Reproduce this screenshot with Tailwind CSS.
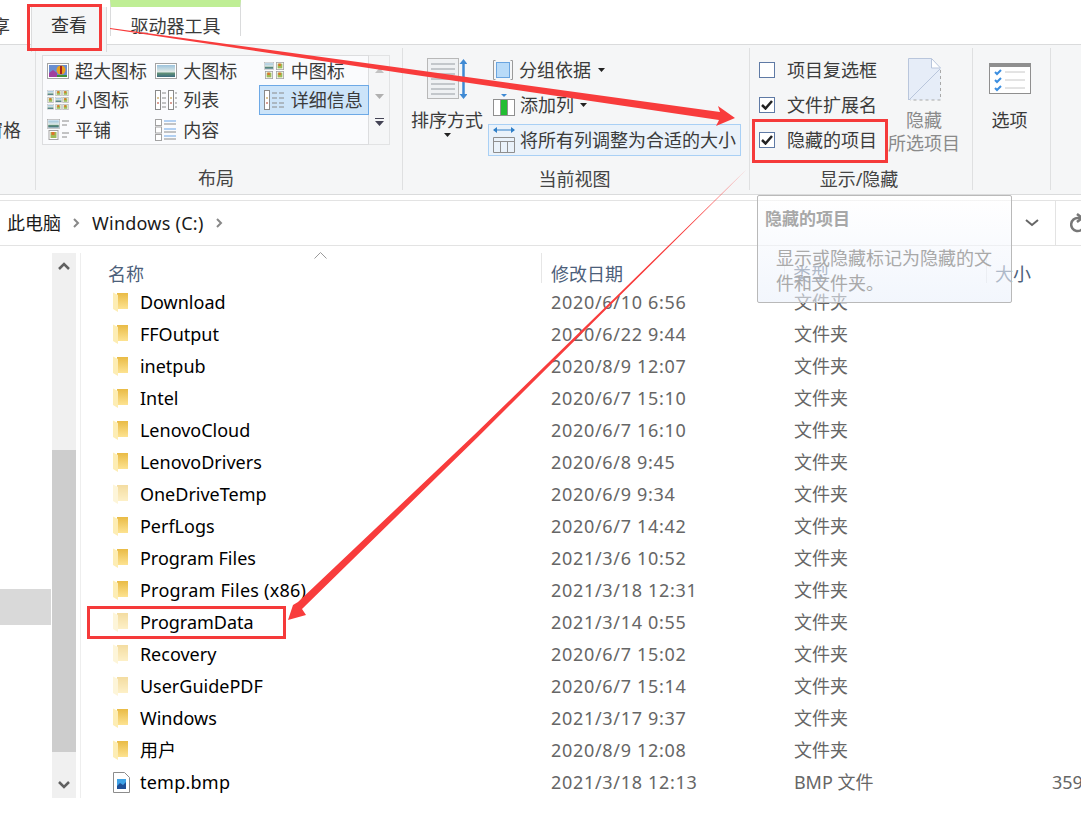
<!DOCTYPE html>
<html lang="zh-CN">
<head>
    <meta charset="UTF-8">
    <title>此电脑 - Windows (C:)</title>
    <script src="https://cdn.jsdelivr.net/npm/@tailwindcss/browser@4"></script>
</head>
<body class="bg-white">
<svg class="absolute w-0 h-0">
    <defs>
        <linearGradient id="gold" x1="0" y1="0" x2="0" y2="1"><stop offset="0" stop-color="#e9bb45"/><stop offset="1" stop-color="#fde391"/></linearGradient>
        <linearGradient id="sky" x1="0" y1="0" x2="0" y2="1"><stop offset="0" stop-color="#9cc3dc"/><stop offset=".55" stop-color="#dfe9e6"/><stop offset=".7" stop-color="#5f8f78"/><stop offset="1" stop-color="#3d6d80"/></linearGradient>
        <symbol id="folder" viewBox="0 0 15 20">
            <path d="M4 1h11v16H4z" fill="url(#gold)"/>
            <path d="M0 .5 5 3v17l-5-3z" fill="#fdedb4"/>
        </symbol>
        <symbol id="land" viewBox="0 0 22 16">
            <rect x=".5" y=".5" width="21" height="15" fill="#fff" stroke="#a3a3a3"/>
            <rect x="2" y="2" width="18" height="12" fill="url(#sky)"/>
        </symbol>
        <symbol id="flower" viewBox="0 0 10 10">
            <rect x=".5" y=".5" width="9" height="9" fill="#fff" stroke="#a3a3a3"/>
            <rect x="2" y="2" width="6" height="6" fill="#9dbb57"/>
            <rect x="3" y="2" width="3" height="3" fill="#e0722b"/>
        </symbol>
    </defs>
</svg>

<div class="relative w-[1081px] h-[816px] overflow-hidden bg-white text-[18px] leading-none text-[#3b3b3b] font-['Noto_Sans','Noto_Sans_CJK_SC',sans-serif]">

    <!-- tabs -->
    <div class="flex h-[45px] border-b border-[#dadbdc]">
        <div class="w-[31px] flex justify-end items-center pt-[8px] pr-[21px] overflow-hidden whitespace-nowrap">共享</div>
        <div class="w-[76px] h-[45px] mt-[7px] -mb-[1px] bg-[#f5f6f7] border-x border-[#dadbdc] flex items-center justify-center pb-[10px] text-[#333]">查看</div>
        <div class="ml-[3px] w-[131px] h-[36px] border-x border-[#dadbdc] border-t-[7px] border-t-[#bfee95] bg-white flex items-center justify-center pt-[8px]">驱动器工具</div>
    </div>

    <!-- ribbon -->
    <div class="flex h-[150px] bg-[#f5f6f7] border-b border-[#dadbdc] pt-[3px] pb-[4px]">
        <div class="w-[36px] border-r border-[#dfe0e1] overflow-hidden whitespace-nowrap flex justify-end pr-[14px] pt-[73px]">窗格</div>

        <!-- layout -->
        <div class="w-[367px] border-r border-[#dfe0e1] flex flex-col items-start pl-[6px]">
            <div class="flex mt-[7px]">
                <div class="w-[327px] h-[90px] bg-[#fafbfd] border border-[#dcdddf] grid grid-cols-3 grid-rows-[29px_30px_29px]">
                    <div class="flex items-center pl-[4px] gap-[6px]">
                        <svg class="w-[22px] h-[16px]" viewBox="0 0 22 16"><rect x=".5" y=".5" width="21" height="15" fill="#fff" stroke="#a3a3a3"/><rect x="2" y="2" width="18" height="12" fill="#6a8ed0"/><path d="M2 14v-4l4-3 4 3v4z" fill="#a13f9e"/><path d="M10 14h10v-2H10z" fill="#3f8f3a"/><circle cx="14" cy="7" r="4.5" fill="#e8a020"/><rect x="13" y="3" width="2" height="8" fill="#a32020"/></svg>
                        <span>超大图标</span>
                    </div>
                    <div class="flex items-center pl-[4px] gap-[6px]">
                        <svg class="w-[22px] h-[16px]"><use href="#land"/></svg>
                        <span>大图标</span>
                    </div>
                    <div class="flex items-center pl-[4px] gap-[6px]">
                        <span class="grid grid-cols-2 gap-[1px] w-[21px]">
                            <svg class="w-[10px] h-[8px]"><use href="#land"/></svg>
                            <svg class="w-[10px] h-[8px]"><use href="#flower"/></svg>
                            <svg class="w-[10px] h-[8px]"><use href="#flower"/></svg>
                            <svg class="w-[10px] h-[8px]"><use href="#flower"/></svg>
                        </span>
                        <span>中图标</span>
                    </div>
                    <div class="flex items-center pl-[4px] gap-[6px]">
                        <span class="grid grid-cols-3 gap-px w-[22px]">
                            <svg class="w-[7px] h-[6px]"><use href="#land"/></svg><svg class="w-[7px] h-[6px]"><use href="#flower"/></svg><svg class="w-[7px] h-[6px]"><use href="#flower"/></svg>
                            <svg class="w-[7px] h-[6px]"><use href="#flower"/></svg><svg class="w-[7px] h-[6px]"><use href="#land"/></svg><svg class="w-[7px] h-[6px]"><use href="#flower"/></svg>
                            <svg class="w-[7px] h-[6px]"><use href="#land"/></svg><svg class="w-[7px] h-[6px]"><use href="#flower"/></svg><svg class="w-[7px] h-[6px]"><use href="#flower"/></svg>
                        </span>
                        <span>小图标</span>
                    </div>
                    <div class="flex items-center pl-[4px] gap-[6px]">
                        <svg class="w-[22px] h-[20px]" viewBox="0 0 22 20" fill="none" stroke="#8a8a8a"><rect x=".5" y=".5" width="5" height="19" fill="#fff"/><rect x="13.5" y=".5" width="5" height="19" fill="#fff"/><path d="M7 3h4M7 8h4M7 13h4M7 17h4M20 3h2M20 8h2M20 13h2M20 17h2"/><path d="M2 8h2M15 8h2" stroke="#b98a2c"/><path d="M2 13h2M15 13h2" stroke="#b5402c"/></svg>
                        <span>列表</span>
                    </div>
                    <div class="flex items-center pl-[4px] gap-[5px] bg-[#cce4f9] border border-[#6da9e6] -ml-[1px] -mr-[1px]">
                        <svg class="w-[22px] h-[20px]" viewBox="0 0 22 20" fill="none" stroke="#8a8a8a"><rect x=".5" y=".5" width="5" height="19" fill="#fff"/><path d="M8 3h5M15 3h5M8 8h5M15 8h5M8 13h5M15 13h5M8 17h5M15 17h5"/><path d="M2 8h2" stroke="#b98a2c"/><path d="M2 13h2" stroke="#b5402c"/></svg>
                        <span>详细信息</span>
                    </div>
                    <div class="flex items-center pl-[4px] gap-[6px]">
                        <span class="grid grid-cols-[13px_9px] gap-y-[1px] w-[22px]">
                            <svg class="w-[13px] h-[10px]"><use href="#land"/></svg>
                            <svg class="w-[9px] h-[10px]" viewBox="0 0 9 10" stroke="#8a8a8a"><path d="M2 2h7M2 6h5"/></svg>
                            <svg class="w-[13px] h-[10px]"><use href="#flower"/></svg>
                            <svg class="w-[9px] h-[10px]" viewBox="0 0 9 10" stroke="#8a8a8a"><path d="M2 3h7M2 7h5"/></svg>
                        </span>
                        <span>平铺</span>
                    </div>
                    <div class="flex items-center pl-[4px] gap-[6px]">
                        <svg class="w-[22px] h-[22px]" viewBox="0 0 22 22" fill="#fff"><g stroke="#a3a3a3"><rect x=".5" y=".5" width="6" height="6"/><rect x=".5" y="8" width="6" height="6"/><rect x=".5" y="15.5" width="6" height="6"/></g><path d="M9 2h12M9 10h12M9 17h12" stroke="#6aa5e8"/><path d="M9 5h12M9 13h12M9 20h12" stroke="#8a8a8a"/></svg>
                        <span>内容</span>
                    </div>
                </div>
                <div class="w-[21px] h-[90px] border border-l-0 border-[#e2e3e4] flex flex-col items-center">
                    <svg class="w-[9px] h-[5px] mt-[12px]" viewBox="0 0 9 5" fill="#c3c3c3"><path d="M0 5 4.500 0 9 5z"/></svg>
                    <svg class="w-[9px] h-[5px] mt-[21px]" viewBox="0 0 9 5" fill="#b0b0b0"><path d="M0 0 4.500 5 9 0z"/></svg>
                    <svg class="w-[9px] h-[8px] mt-[19px]" viewBox="0 0 9 8" fill="#445"><path d="M0 0h9v1H0zM0 3l4.500 5L9 3z"/></svg>
                </div>
            </div>
            <div class="w-[348px] text-center mt-[24px] text-[#444]">布局</div>
        </div>

        <!-- current view -->
        <div class="w-[347px] border-r border-[#dfe0e1] flex flex-col">
            <div class="flex h-[115px] pl-[6px]">
                <div class="w-[76px] flex flex-col items-center pt-[10px]">
                    <svg class="w-[40px] h-[42px]" viewBox="0 0 40 42"><rect x=".5" y=".5" width="31" height="40" fill="#eff1f3" stroke="#b8b8b8"/><path d="M4 6h24M4 11h24M4 16h24M4 21h24M4 26h24M4 31h24M4 36h24" stroke="#c3c7cb" stroke-width="2"/><path d="M36.500 3v36" stroke="#3f8ad4" stroke-width="2.500"/><path d="M32.500 6 36.500 1l4 5zM32.500 36l4 5 4-5z" fill="#3f8ad4"/></svg>
                    <span class="mt-[11px]">排序方式</span>
                    <svg class="w-[7px] h-[4px] mt-[4px]" viewBox="0 0 7 4" fill="#222"><path d="M0 0h7L3.500 4z"/></svg>
                </div>
                <div class="flex flex-col items-start ml-[3px] pt-[6px]">
                    <div class="h-[32px] flex items-center pl-[5px] gap-[6px]">
                        <svg class="w-[20px] h-[20px]" viewBox="0 0 20 20" fill="none"><path d="M2.500 .5h-2v19h2M17.500 .5h2v19h-2" stroke="#9a9a9a"/><rect x="3.500" y="2.500" width="13" height="15" fill="#b9dbf8" stroke="#6aa5e0"/></svg>
                        <span>分组依据</span>
                        <svg class="w-[7px] h-[4px] ml-[1px]" viewBox="0 0 7 4" fill="#222"><path d="M0 0h7L3.500 4z"/></svg>
                    </div>
                    <div class="h-[38px] flex items-center pl-[5px] gap-[5px]">
                        <svg class="w-[22px] h-[22px]" viewBox="0 0 22 22" fill="none"><path d="M8 0h6l-3 3z" fill="#3f8ad4"/><rect x=".5" y="5.500" width="21" height="16" fill="#fff" stroke="#8f8f8f"/><path d="M7.500 6v15M14.500 6v15" stroke="#8f8f8f"/><rect x="8" y="6" width="6" height="15" fill="#22bd32"/></svg>
                        <span>添加列</span>
                        <svg class="w-[7px] h-[4px] ml-[1px]" viewBox="0 0 7 4" fill="#222"><path d="M0 0h7L3.500 4z"/></svg>
                    </div>
                    <div class="h-[32px] w-[253px] flex items-center pl-[4px] gap-[5px] bg-[#eaf2fa] border border-[#a9d0f5] whitespace-nowrap">
                        <svg class="w-[22px] h-[26px] shrink-0" viewBox="0 0 22 26" fill="none"><path d="M1 3h20" stroke="#2f7fc8"/><path d="M4 0 0 3l4 3zM18 0l4 3-4 3z" fill="#2f7fc8"/><path d="M.5 10.500h21v15H.5zM.5 14.500h21M7.500 15v10M14.500 15v10" stroke="#8f8f8f"/></svg>
                        <span>将所有列调整为合适的大小</span>
                    </div>
                </div>
            </div>
            <div class="text-center text-[#444] mt-[7px] pr-[3px]">当前视图</div>
        </div>

        <!-- show/hide -->
        <div class="w-[223px] border-r border-[#dfe0e1] flex flex-col">
            <div class="flex h-[115px]">
                <div class="flex flex-col w-[140px] pl-[9px] pt-[4px]">
                    <label class="h-[35px] flex items-center gap-[12px] whitespace-nowrap"><span class="w-[16px] h-[16px] border border-[#5f7aa5] bg-white"></span>项目复选框</label>
                    <label class="h-[35px] flex items-center gap-[12px] whitespace-nowrap"><span class="w-[16px] h-[16px] border border-[#5f7aa5] bg-white flex items-center justify-center"><svg class="w-[12px] h-[10px]" viewBox="0 0 12 10" fill="none" stroke="#222" stroke-width="2.500"><path d="M1 5l3.500 3.500L11 1"/></svg></span>文件扩展名</label>
                    <label class="h-[35px] flex items-center gap-[12px] whitespace-nowrap"><span class="w-[16px] h-[16px] border border-[#5f7aa5] bg-white flex items-center justify-center"><svg class="w-[12px] h-[10px]" viewBox="0 0 12 10" fill="none" stroke="#222" stroke-width="2.500"><path d="M1 5l3.500 3.500L11 1"/></svg></span>隐藏的项目</label>
                </div>
                <div class="flex flex-col items-center w-[72px] pt-[10px] text-[#8a8a8a] whitespace-nowrap -ml-[2px]">
                    <svg class="w-[33px] h-[43px]" viewBox="0 0 33 43" fill="none"><path d="M.5 42V.5h23L32.500 10v32" fill="#e6edf8"/><path d="M.5 42V.5h23" stroke="#b9c6dc"/><path d="M23.500.5V10h9z" fill="#fff" stroke="#b9c6dc"/><path d="M32.500 12v30H2" stroke="#a9a9a9" stroke-dasharray="3 3"/><path d="M1 42 32 11" stroke="#b9c6dc"/></svg>
                    <span class="mt-[10px]">隐藏</span>
                    <span class="mt-[5px]">所选项目</span>
                </div>
            </div>
            <div class="text-center text-[#444] mt-[7px] pr-[4px]">显示/隐藏</div>
        </div>

        <!-- options -->
        <div class="w-[78px] border-r border-[#dfe0e1] flex flex-col items-center pt-[15px] pr-[4px]">
            <svg class="w-[42px] h-[31px]" viewBox="0 0 42 31" fill="none"><rect x=".5" y=".5" width="41" height="30" fill="#fff" stroke="#8f8f8f"/><rect width="42" height="4" fill="#8f8f8f"/><path d="M6 9l2 2 4-4M6 17l2 2 4-4M6 25l2 2 4-4" stroke="#3b8ee0" stroke-width="2"/><path d="M16 9h20M16 17h20M16 25h20" stroke="#c8c8c8"/></svg>
            <span class="mt-[17px]">选项</span>
        </div>
    </div>

    <!-- address bar -->
    <div class="flex items-center h-[46px] mt-[5px] border-t border-[#e3e3e3] border-b pl-[7px] text-[#1a1a1a]">
        <span>此电脑</span>
        <svg class="w-[7px] h-[10px] mx-[12px]" viewBox="0 0 7 10" fill="none" stroke="#888" stroke-width="2"><path d="M1 1l4 4-4 4"/></svg>
        <span class="tracking-[0.25px]">Windows (C:)</span>
        <svg class="w-[7px] h-[10px] ml-[12px]" viewBox="0 0 7 10" fill="none" stroke="#888" stroke-width="2"><path d="M1 1l4 4-4 4"/></svg>
        <svg class="w-[14px] h-[8px] ml-auto" viewBox="0 0 14 8" fill="none" stroke="#666" stroke-width="2"><path d="M1 1l6 5 6-5"/></svg>
        <div class="w-[26px] h-full ml-[16px] border-l border-[#e3e3e3] flex items-center pl-[14px]">
            <svg class="w-[16px] h-[20px] shrink-0" viewBox="0 0 16 20" fill="none" stroke="#777" stroke-width="2.500"><path d="M11 5H8a6.500 6.500 0 1 0 6 8"/><path d="M7 1l5 4-5 4"/></svg>
        </div>
    </div>

    <!-- content -->
    <div class="flex pt-[7px]">
        <div class="w-[52px] pt-[336px] shrink-0">
            <div class="w-[51px] h-[36px] bg-[#d9d9d9]"></div>
        </div>
        <div class="w-[24px] h-[545px] bg-[#f0f0f0] flex flex-col items-center shrink-0">
            <svg class="w-[12px] h-[8px] mt-[9px]" viewBox="0 0 12 8" fill="none" stroke="#606060" stroke-width="2.500"><path d="M1 7l5-5 5 5"/></svg>
            <div class="w-full h-[302px] bg-[#cdcdcd] mt-[180px]"></div>
            <svg class="w-[12px] h-[8px] mt-[29px]" viewBox="0 0 12 8" fill="none" stroke="#606060" stroke-width="2.500"><path d="M1 1l5 5 5-5"/></svg>
        </div>
        <div class="w-[4px] h-[545px] ml-[1px] border-r border-[#eeeeee]"></div>

        <div class="grow min-w-0">
            <!-- column headers -->
            <div class="relative flex h-[33px] text-[#4c607a] pt-[12px]">
                <span class="w-[460px] pl-[27px]">名称</span>
                <span class="w-[243px] pl-[9px] border-l border-[#e6e6e6] h-[30px] -mt-[12px] pt-[12px]">修改日期</span>
                <span class="w-[202px] pl-[8px] border-l border-[#e6e6e6] h-[30px] -mt-[12px] pt-[12px]">类型</span>
                <span class="pl-[8px] border-l border-[#e6e6e6] h-[30px] -mt-[12px] pt-[12px]">大小</span>
                <svg class="absolute left-[233px] -top-[1px] w-[13px] h-[7px]" viewBox="0 0 13 7" fill="none" stroke="#9a9a9a"><path d="M.5 6.500l6-6 6 6"/></svg>
            </div>

            <!-- rows -->
            <div class="text-[#666]">
                <div class="flex items-center h-[32px]"><svg class="w-[15px] h-[20px] ml-[32px] shrink-0"><use href="#folder"/></svg><span class="w-[423px] pl-[12px] text-black">Download</span><span class="w-[243px] tracking-[0.7px]">2020/6/10 6:56</span><span>文件夹</span></div>
                <div class="flex items-center h-[32px]"><svg class="w-[15px] h-[20px] ml-[32px] shrink-0"><use href="#folder"/></svg><span class="w-[423px] pl-[12px] text-black">FFOutput</span><span class="w-[243px] tracking-[0.7px]">2020/6/22 9:44</span><span>文件夹</span></div>
                <div class="flex items-center h-[32px]"><svg class="w-[15px] h-[20px] ml-[32px] shrink-0"><use href="#folder"/></svg><span class="w-[423px] pl-[12px] text-black">inetpub</span><span class="w-[243px] tracking-[0.7px]">2020/8/9 12:07</span><span>文件夹</span></div>
                <div class="flex items-center h-[32px]"><svg class="w-[15px] h-[20px] ml-[32px] shrink-0"><use href="#folder"/></svg><span class="w-[423px] pl-[12px] text-black">Intel</span><span class="w-[243px] tracking-[0.7px]">2020/6/7 15:10</span><span>文件夹</span></div>
                <div class="flex items-center h-[32px]"><svg class="w-[15px] h-[20px] ml-[32px] shrink-0"><use href="#folder"/></svg><span class="w-[423px] pl-[12px] text-black">LenovoCloud</span><span class="w-[243px] tracking-[0.7px]">2020/6/7 16:10</span><span>文件夹</span></div>
                <div class="flex items-center h-[32px]"><svg class="w-[15px] h-[20px] ml-[32px] shrink-0"><use href="#folder"/></svg><span class="w-[423px] pl-[12px] text-black">LenovoDrivers</span><span class="w-[243px] tracking-[0.7px]">2020/6/8 9:45</span><span>文件夹</span></div>
                <div class="flex items-center h-[32px]"><svg class="w-[15px] h-[20px] ml-[32px] shrink-0 opacity-50"><use href="#folder"/></svg><span class="w-[423px] pl-[12px] text-black">OneDriveTemp</span><span class="w-[243px] tracking-[0.7px]">2020/6/9 9:34</span><span>文件夹</span></div>
                <div class="flex items-center h-[32px]"><svg class="w-[15px] h-[20px] ml-[32px] shrink-0"><use href="#folder"/></svg><span class="w-[423px] pl-[12px] text-black">PerfLogs</span><span class="w-[243px] tracking-[0.7px]">2020/6/7 14:42</span><span>文件夹</span></div>
                <div class="flex items-center h-[32px]"><svg class="w-[15px] h-[20px] ml-[32px] shrink-0"><use href="#folder"/></svg><span class="w-[423px] pl-[12px] text-black">Program Files</span><span class="w-[243px] tracking-[0.7px]">2021/3/6 10:52</span><span>文件夹</span></div>
                <div class="flex items-center h-[32px]"><svg class="w-[15px] h-[20px] ml-[32px] shrink-0"><use href="#folder"/></svg><span class="w-[423px] pl-[12px] text-black tracking-[0.25px]">Program Files (x86)</span><span class="w-[243px] tracking-[0.7px]">2021/3/18 12:31</span><span>文件夹</span></div>
                <div class="flex items-center h-[32px]"><svg class="w-[15px] h-[20px] ml-[32px] shrink-0 opacity-50"><use href="#folder"/></svg><span class="w-[423px] pl-[12px] text-black">ProgramData</span><span class="w-[243px] tracking-[0.7px]">2021/3/14 0:55</span><span>文件夹</span></div>
                <div class="flex items-center h-[32px]"><svg class="w-[15px] h-[20px] ml-[32px] shrink-0 opacity-50"><use href="#folder"/></svg><span class="w-[423px] pl-[12px] text-black">Recovery</span><span class="w-[243px] tracking-[0.7px]">2020/6/7 15:02</span><span>文件夹</span></div>
                <div class="flex items-center h-[32px]"><svg class="w-[15px] h-[20px] ml-[32px] shrink-0 opacity-50"><use href="#folder"/></svg><span class="w-[423px] pl-[12px] text-black">UserGuidePDF</span><span class="w-[243px] tracking-[0.7px]">2020/6/7 15:14</span><span>文件夹</span></div>
                <div class="flex items-center h-[32px]"><svg class="w-[15px] h-[20px] ml-[32px] shrink-0"><use href="#folder"/></svg><span class="w-[423px] pl-[12px] text-black">Windows</span><span class="w-[243px] tracking-[0.7px]">2021/3/17 9:37</span><span>文件夹</span></div>
                <div class="flex items-center h-[32px]"><svg class="w-[15px] h-[20px] ml-[32px] shrink-0"><use href="#folder"/></svg><span class="w-[423px] pl-[12px] text-black">用户</span><span class="w-[243px] tracking-[0.7px]">2020/8/9 12:08</span><span>文件夹</span></div>
                <div class="flex items-center h-[32px] whitespace-nowrap"><svg class="w-[17px] h-[21px] ml-[32px] shrink-0" viewBox="0 0 17 21" fill="none"><path d="M.5.500h11l5 5v15H.5z" fill="#fff" stroke="#8c8c8c"/><rect x="4" y="7" width="9" height="10" fill="#1f4f96"/><path d="M4 14l3-3 3 2 3-3v-3H4z" fill="#3fa2e6"/></svg><span class="w-[421px] shrink-0 pl-[10px] text-black tracking-[0.25px]">temp.bmp</span><span class="w-[243px] shrink-0 tracking-[0.7px]">2021/3/18 12:13</span><span class="w-[258px] shrink-0">BMP 文件</span><span class="shrink-0">359 KB</span></div>
            </div>
        </div>
    </div>

    <!-- tooltip -->
    <div class="absolute left-[757px] top-[195px] w-[255px] h-[108px] rounded-[2px] border border-[#b9b9b9] bg-linear-to-b from-white/60 to-[#eaf0fb]/60 pl-[18px] pr-[8px]">
        <div class="-ml-[11px] mt-[14px] font-bold text-[17px] text-[#a8a8a8]">隐藏的项目</div>
        <div class="mt-[19px] leading-[25px] text-[#a9a9a9]">显示或隐藏标记为隐藏的文件和文件夹。</div>
    </div>

    <!-- annotations -->
    <div class="absolute left-[27px] top-[4px] w-[75px] h-[47px] border-[3px] border-[#f53a3a]"></div>
    <div class="absolute left-[752px] top-[119px] w-[136px] h-[44px] border-[3px] border-[#f53a3a]"></div>
    <div class="absolute left-[87px] top-[606px] w-[199px] h-[33px] border-[3px] border-[#f53a3a]"></div>
    <svg class="absolute left-0 top-0 pointer-events-none" width="1081" height="816" viewBox="0 0 1081 816" fill="#f83c3c">
        <path d="M110 28 L400 67.800 L720 112 L718 106 L735 118 L716 126 L719 120 L400 72.800 L110 29 Z"/>
        <path d="M748 168 L475.600 433.600 L298 602 L293 605 L288 620 L306 615 L302 609 L478.400 436.400 Z"/>
    </svg>
</div>
</body>
</html>
